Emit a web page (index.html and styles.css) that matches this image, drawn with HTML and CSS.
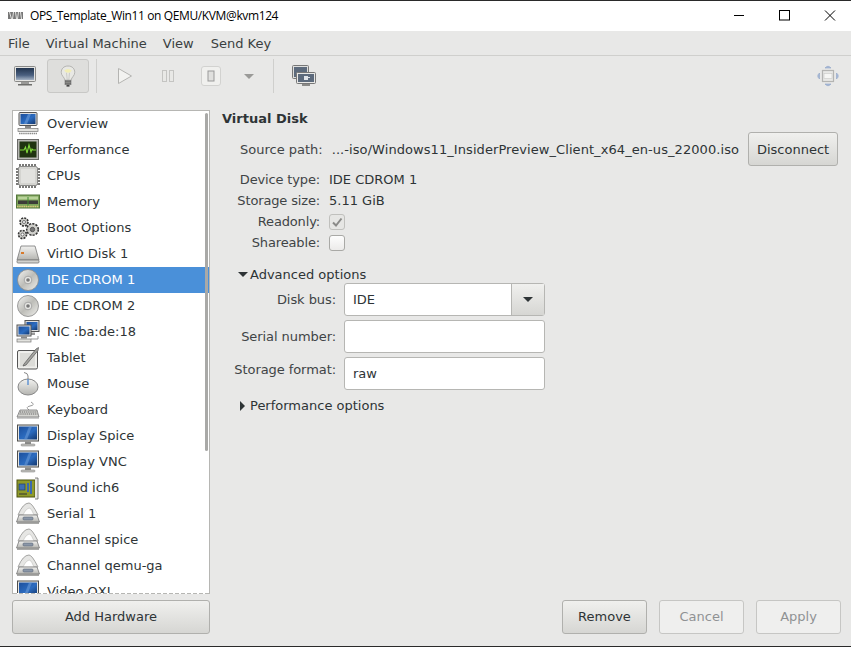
FILE: index.html
```html
<!DOCTYPE html>
<html lang="en">
<head>
    <meta charset="UTF-8">
    <title>OPS_Template_Win11 on QEMU/KVM@kvm124</title>
    <link rel="stylesheet" href="styles.css">
</head>
<body>
    <svg class="defs" width="0" height="0">
        <defs>
            <linearGradient id="screen" x1="0" y1="0" x2="1" y2="1">
                <stop offset="0" stop-color="#1d4f9c"/>
                <stop offset="0.55" stop-color="#2c6cc0"/>
                <stop offset="1" stop-color="#14386f"/>
            </linearGradient>
            <linearGradient id="slate" x1="0" y1="0" x2="0" y2="1">
                <stop offset="0" stop-color="#22344e"/>
                <stop offset="0.6" stop-color="#4a6080"/>
                <stop offset="1" stop-color="#a4b2c4"/>
            </linearGradient>
            <linearGradient id="disc" x1="0" y1="0" x2="1" y2="1">
                <stop offset="0" stop-color="#f4f4f2"/>
                <stop offset="0.5" stop-color="#bdbdb8"/>
                <stop offset="1" stop-color="#efefec"/>
            </linearGradient>
            <linearGradient id="metal" x1="0" y1="0" x2="0" y2="1">
                <stop offset="0" stop-color="#f2f2f0"/>
                <stop offset="1" stop-color="#b4b4b0"/>
            </linearGradient>
            <symbol id="i-toolmon" viewBox="0 0 22 20">
                <rect x=".5" y=".5" width="21" height="15" rx="1" fill="#e4e4e2" stroke="#8a8a88"/>
                <rect x="2" y="2" width="18" height="12" fill="url(#slate)"/>
                <rect x="7" y="16" width="8" height="2" fill="#9a9a98"/>
                <rect x="4" y="18" width="14" height="1.500" fill="#6e6e6c"/>
            </symbol>
            <symbol id="i-monitor" viewBox="0 0 24 24">
                <rect x="1.500" y="1" width="21" height="16" fill="#e6e6e3" stroke="#4f4f4d"/>
                <rect x="3" y="2.500" width="18" height="13" fill="url(#screen)"/>
                <path d="M8 15.500 L13 2.500 H16 L11 15.500Z" fill="#6d9cd8" opacity=".55"/>
                <rect x="9" y="17.500" width="6" height="2.500" fill="#8c8c8a"/>
                <rect x="5" y="20" width="14" height="2" rx="1" fill="#c4c4c0" stroke="#777" stroke-width=".5"/>
            </symbol>
            <symbol id="i-overview" viewBox="0 0 24 24">
                <rect x="3" y="0.500" width="18" height="13" rx="1" fill="#ddd" stroke="#555"/>
                <rect x="4.500" y="2" width="15" height="10" fill="url(#screen)"/>
                <path d="M8 12 L12 2 H15 L11 12Z" fill="#6d9cd8" opacity=".6"/>
                <rect x="9" y="14" width="6" height="2" fill="#888"/>
                <rect x="2" y="16.500" width="20" height="3" fill="#e2e2de" stroke="#777" stroke-width=".7"/>
                <path d="M3 21.500H21" stroke="#8c8c8a" stroke-width="1.500" stroke-dasharray="1.500 .6"/>
            </symbol>
            <symbol id="i-perf" viewBox="0 0 24 24">
                <rect x="1.500" y="1.500" width="21" height="20" fill="#b8b8b4" stroke="#6a6a68"/>
                <rect x="3.500" y="3.500" width="17" height="16" fill="#1f3310"/>
                <path d="M4 12H8L9.500 9 11 15 13 7 15 14 16 11 17 12H20" fill="none" stroke="#7fd63a" stroke-width="1.100"/>
            </symbol>
            <symbol id="i-cpu" viewBox="0 0 24 24">
                <path d="M4 0V24M7 0V24M10 0V24M13 0V24M16 0V24M19 0V24M0 5H24M0 8H24M0 11H24M0 14H24M0 17H24M0 20H24" stroke="#7a7a78" stroke-width="2"/>
                <rect x="2.500" y="2.500" width="19" height="19" rx="2" fill="#d4d4d0" stroke="#8a8a88"/>
                <rect x="5" y="5" width="14" height="14" fill="#e2e2df"/>
            </symbol>
            <symbol id="i-memory" viewBox="0 0 24 24">
                <rect x="0.500" y="5" width="23" height="13" fill="#7da35a" stroke="#54763b"/>
                <rect x="2" y="6.500" width="20" height="3" fill="#b9d39a"/>
                <rect x="2" y="10.500" width="20" height="3.500" fill="#3c3c38"/>
                <path d="M12 7V16" stroke="#3f8a2e"/>
                <path d="M1 16.500H23" stroke="#d9c77a" stroke-dasharray="1.500 .7" stroke-width="1.400"/>
            </symbol>
            <symbol id="i-gears" viewBox="0 0 24 24">
                <g fill="#d0d0cc" stroke="#333" stroke-width="1.600">
                    <circle cx="8" cy="6" r="4" stroke-dasharray="2 1.100"/>
                    <circle cx="16.500" cy="13.500" r="5.800" stroke-dasharray="2.200 1.100"/>
                    <circle cx="6.500" cy="18.500" r="4" stroke-dasharray="2 1.100"/>
                </g>
                <circle cx="8" cy="6" r="1.500" fill="#fff" stroke="#555" stroke-width=".8"/>
                <circle cx="16.500" cy="13.500" r="2.200" fill="#777" stroke="#444" stroke-width=".8"/>
                <circle cx="6.500" cy="18.500" r="1.500" fill="#fff" stroke="#555" stroke-width=".8"/>
            </symbol>
            <symbol id="i-disk" viewBox="0 0 24 24">
                <path d="M5 4H19L23 18H1Z" fill="url(#metal)" stroke="#777" stroke-width=".8"/>
                <rect x="1" y="18" width="22" height="3" rx="1" fill="#d2d2ce" stroke="#777" stroke-width=".8"/>
                <rect x="5" y="10" width="3" height="2" fill="#d87a2c"/>
            </symbol>
            <symbol id="i-cdrom" viewBox="0 0 24 24">
                <circle cx="12" cy="12" r="10.500" fill="url(#disc)" stroke="#888" stroke-width=".8"/>
                <circle cx="12" cy="12" r="3.800" fill="#e6e6e3" stroke="#999" stroke-width=".8"/>
                <circle cx="12" cy="12" r="1.800" fill="#777"/>
            </symbol>
            <symbol id="i-nic" viewBox="0 0 24 24">
                <rect x="9" y="0.500" width="14" height="11" fill="#ddd" stroke="#555"/>
                <rect x="10.500" y="2" width="11" height="8" fill="url(#screen)"/>
                <path d="M13 12.500H19V15H13Z" fill="#999"/>
                <rect x="1" y="5" width="14" height="11" fill="#ddd" stroke="#555"/>
                <rect x="2.500" y="6.500" width="11" height="8" fill="url(#screen)"/>
                <rect x="5" y="16.500" width="6" height="2" fill="#888"/>
                <rect x="1" y="19" width="14" height="3" fill="#e2e2de" stroke="#777" stroke-width=".7"/>
                <path d="M15 19H22V16" fill="none" stroke="#999"/>
            </symbol>
            <symbol id="i-tablet" viewBox="0 0 24 24">
                <rect x="1.500" y="4.500" width="20" height="18.500" rx="1.500" fill="#efefec" stroke="#555"/>
                <rect x="4" y="7" width="15" height="13.500" fill="#dcdcd8"/>
                <path d="M8 18 L20 3 L22.500 1.500 L22 4.500 L10 19 L7 20Z" fill="#a4a4a0" stroke="#555" stroke-width=".7"/>
            </symbol>
            <symbol id="i-mouse" viewBox="0 0 24 24">
                <path d="M12 9V4Q12 1 8 0.500" fill="none" stroke="#888"/>
                <ellipse cx="12" cy="15" rx="10" ry="8" fill="url(#metal)" stroke="#888"/>
                <path d="M12 7V13" stroke="#5a8fd0" stroke-width="1.400"/>
            </symbol>
            <symbol id="i-keyboard" viewBox="0 0 24 24">
                <path d="M13 12Q9 9 14 8 20 7 15 4" fill="none" stroke="#999"/>
                <path d="M4 12H21L23 19H1Z" fill="#d6d6d2" stroke="#777" stroke-width=".8"/>
                <path d="M4 14H21M3.500 16H21.500" stroke="#666" stroke-dasharray="1.200 .7"/>
                <path d="M1 20H23" stroke="#999"/>
            </symbol>
            <symbol id="i-sound" viewBox="0 0 24 24">
                <rect x="1" y="4" width="18" height="17" fill="#8f9a2a" stroke="#4c5210"/>
                <path d="M19 2H22V23H19" fill="#e6e6e3" stroke="#666" stroke-width=".8"/>
                <rect x="3" y="8" width="6" height="6" fill="#3f6fb0" stroke="#223f6c" stroke-width=".7"/>
                <path d="M12 7V16M15 5V18" stroke="#3b68b0" stroke-width="2"/>
                <path d="M3 18H11" stroke="#333"/>
            </symbol>
            <symbol id="i-serial" viewBox="0 0 24 24">
                <path d="M2 13Q7 1 13 1 16 1 22 13Z" fill="#e6e6e4" stroke="#a4a4a2"/>
                <path d="M7 13Q10 6 14 6 16 8 18 13Z" fill="#fff" stroke="#c4c4c2" stroke-width=".7"/>
                <path d="M3 13H21L23.500 20H.5Z" fill="url(#metal)" stroke="#777" stroke-width=".8"/>
                <rect x="7" y="15" width="10" height="3" rx="1" fill="#8b97a8" stroke="#5c6675" stroke-width=".6"/>
                <path d="M1 21H23" stroke="#8c8c8a" stroke-width="1.500"/>
            </symbol>
            <symbol id="i-bulb" viewBox="0 0 24 30">
                <path d="M12 1C6 1 3 5 3 9.500 3 14 7 15.500 8 20H16C17 15.500 21 14 21 9.500 21 5 18 1 12 1Z" fill="#e8e8e4" stroke="#a4a4a2"/>
                <path d="M7 7Q12 3 17 7 15.500 10 12 10 8.500 10 7 7Z" fill="#f2eeb4"/>
                <path d="M10 10L11 20M14 10L13 20" stroke="#b0b0ae" stroke-width=".7"/>
                <rect x="8" y="20" width="8" height="6" fill="#a9a9a5" stroke="#666" stroke-width=".7"/>
                <path d="M8 22H16M8 24H16" stroke="#444" stroke-width=".9"/>
                <rect x="10" y="26" width="4" height="2.500" fill="#444"/>
            </symbol>
        </defs>
    </svg>

    <div class="titlebar">
        <svg class="app-icon" width="15" height="7" viewBox="0 0 15 7">
            <rect width="15" height="7" fill="#777"/>
            <path d="M1.500 0L3.500 7M5.500 0L4.500 7M7.500 0L8.500 7M10.500 0L9.500 7M12.500 0L13.500 7" stroke="#e4e4e2" stroke-width="1"/>
        </svg>
        <span class="title">OPS_Template_Win11 on QEMU/KVM@kvm124</span>
        <div class="win-controls">
            <svg width="46" height="30" viewBox="0 0 46 30"><path d="M19 14.500H29" stroke="#000"/></svg>
            <svg width="46" height="30" viewBox="0 0 46 30"><rect x="18.500" y="9.500" width="10" height="9.500" fill="none" stroke="#000"/></svg>
            <svg width="44" height="30" viewBox="0 0 44 30"><path d="M18 9.500L28 19.500M28 9.500L18 19.500" stroke="#000"/></svg>
        </div>
    </div>

    <div class="menubar">
        <span>File</span>
        <span>Virtual Machine</span>
        <span>View</span>
        <span class="menu-last">Send Key</span>
    </div>

    <div class="toolbar">
        <div class="tool"><svg width="22" height="20"><use href="#i-toolmon"/></svg></div>
        <div class="tool tool-on"><svg width="18" height="23"><use href="#i-bulb"/></svg></div>
        <div class="tool-sep"></div>
        <div class="tool tool-run">
            <svg width="14" height="16" viewBox="0 0 14 16"><path d="M.5 .5L13.500 8L.5 15.500Z" fill="#f2f2f0" stroke="#b4b4b2"/></svg>
        </div>
        <div class="tool tool-pause">
            <svg width="12" height="12" viewBox="0 0 12 12">
                <rect x=".5" y=".5" width="4" height="11" fill="#e8e8e6" stroke="#c4c4c2"/>
                <rect x="7.500" y=".5" width="4" height="11" fill="#e8e8e6" stroke="#c4c4c2"/>
            </svg>
        </div>
        <div class="tool-stop">
            <svg width="8" height="12" viewBox="0 0 8 12"><rect x="1" y="1" width="6" height="10" fill="#e0e0de" stroke="#999"/></svg>
        </div>
        <div class="tool-drop"></div>
        <div class="tool-sep tool-sep2"></div>
        <div class="tool tool-shot">
            <svg width="24" height="22" viewBox="0 0 24 22">
                <rect x=".5" y=".5" width="16" height="13" rx="1" fill="#dededc" stroke="#777"/>
                <rect x="2" y="2" width="13" height="10" fill="#5c6a7c"/>
                <rect x="4.500" y="7.500" width="19" height="11" rx="1" fill="#e8e8e6" stroke="#777"/>
                <rect x="6" y="9" width="16" height="8" fill="#5c6a7c"/>
                <path d="M12 11H16V12H18V13H16V15H12Z" fill="#dfe3e8"/>
                <rect x="10" y="19" width="8" height="2" fill="#8a8a88"/>
            </svg>
        </div>
        <div class="tool-fill"></div>
        <svg class="tool-scale" width="24" height="22" viewBox="0 0 24 22">
            <g fill="#a9bcd9" stroke="#8ea3c6" stroke-width=".6">
                <path d="M9 3Q12 -.5 15 3Z"/>
                <path d="M9 19Q12 22.500 15 19Z"/>
                <path d="M3.500 8Q0 11 3.500 14Z"/>
                <path d="M20.500 8Q24 11 20.500 14Z"/>
            </g>
            <rect x="6.500" y="5.500" width="11" height="11" fill="#e8e8e6" stroke="#b4b4b2" stroke-width="1.200"/>
            <rect x="8" y="8.500" width="8" height="5" fill="#f6f6f4" stroke="#c8c8c6" stroke-width=".6"/>
        </svg>
    </div>

    <div class="main">
        <div class="sidebar">
            <div class="hwlist">
                <div class="hw"><svg width="24" height="24"><use href="#i-overview"/></svg><span>Overview</span></div>
                <div class="hw"><svg width="24" height="24"><use href="#i-perf"/></svg><span>Performance</span></div>
                <div class="hw"><svg width="24" height="24"><use href="#i-cpu"/></svg><span>CPUs</span></div>
                <div class="hw"><svg width="24" height="24"><use href="#i-memory"/></svg><span>Memory</span></div>
                <div class="hw"><svg width="24" height="24"><use href="#i-gears"/></svg><span>Boot Options</span></div>
                <div class="hw"><svg width="24" height="24"><use href="#i-disk"/></svg><span>VirtIO Disk 1</span></div>
                <div class="hw hw-sel"><svg width="24" height="24"><use href="#i-cdrom"/></svg><span>IDE CDROM 1</span></div>
                <div class="hw"><svg width="24" height="24"><use href="#i-cdrom"/></svg><span>IDE CDROM 2</span></div>
                <div class="hw"><svg width="24" height="24"><use href="#i-nic"/></svg><span>NIC :ba:de:18</span></div>
                <div class="hw"><svg width="24" height="24"><use href="#i-tablet"/></svg><span>Tablet</span></div>
                <div class="hw"><svg width="24" height="24"><use href="#i-mouse"/></svg><span>Mouse</span></div>
                <div class="hw"><svg width="24" height="24"><use href="#i-keyboard"/></svg><span>Keyboard</span></div>
                <div class="hw"><svg width="24" height="24"><use href="#i-monitor"/></svg><span>Display Spice</span></div>
                <div class="hw"><svg width="24" height="24"><use href="#i-monitor"/></svg><span>Display VNC</span></div>
                <div class="hw"><svg width="24" height="24"><use href="#i-sound"/></svg><span>Sound ich6</span></div>
                <div class="hw"><svg width="24" height="24"><use href="#i-serial"/></svg><span>Serial 1</span></div>
                <div class="hw"><svg width="24" height="24"><use href="#i-serial"/></svg><span>Channel spice</span></div>
                <div class="hw"><svg width="24" height="24"><use href="#i-serial"/></svg><span>Channel qemu-ga</span></div>
                <div class="hw"><svg width="24" height="24"><use href="#i-monitor"/></svg><span>Video QXL</span></div>
                <div class="list-thumb"></div>
                <div class="list-edge"></div>
            </div>
            <div class="btn btn-add"><span>Add Hardware</span></div>
        </div>

        <div class="detail">
            <div class="content">
                <h1>Virtual Disk</h1>
                <div class="source-row">
                    <span class="lbl">Source path:</span>
                    <span class="path">...-iso/Windows11_InsiderPreview_Client_x64_en-us_22000.iso</span>
                    <div class="btn btn-disc"><span>Disconnect</span></div>
                </div>
                <div class="info">
                    <span class="lbl">Device type:</span><span>IDE CDROM 1</span>
                    <span class="lbl">Storage size:</span><span>5.11 GiB</span>
                    <span class="lbl">Readonly:</span>
                    <span class="check check-on">
                        <svg width="12" height="12" viewBox="0 0 12 12"><path d="M2 6.500L5 9.500L10.500 2.500" fill="none" stroke="#8a8a88" stroke-width="2"/></svg>
                    </span>
                    <span class="lbl">Shareable:</span><span class="check"></span>
                </div>
                <div class="expander"><span class="arrow-down"></span>Advanced options</div>
                <div class="advanced">
                    <span class="lbl">Disk bus:</span>
                    <div class="combo"><span class="combo-text">IDE</span><span class="combo-btn"><span class="arrow-down arrow-dark"></span></span></div>
                    <span class="lbl">Serial number:</span>
                    <div class="entry"></div>
                    <span class="lbl lbl-up">Storage format:</span>
                    <div class="entry entry-text">raw</div>
                </div>
                <div class="expander expander2"><span class="arrow-right"></span>Performance options</div>
            </div>
            <div class="actions">
                <div class="btn"><span>Remove</span></div>
                <div class="btn btn-off"><span>Cancel</span></div>
                <div class="btn btn-off"><span>Apply</span></div>
            </div>
        </div>
    </div>
</body>
</html>
```

FILE: styles.css
```css
* { box-sizing: border-box; }
html, body { margin: 0; padding: 0; }
body {
    width: 851px;
    height: 647px;
    overflow: hidden;
    display: flex;
    flex-direction: column;
    background: #e8e8e7;
    color: #2e3436;
    font-family: "DejaVu Sans", sans-serif;
    font-size: 13px;
    border-top: 1px solid #2a2a2a;
    border-bottom: 1px solid #2a2a2a;
}
.defs { position: absolute; }

.titlebar {
    height: 30px;
    flex: none;
    display: flex;
    align-items: center;
    background: #fff;
    padding-left: 8px;
}
.app-icon { margin: 0 7px 2px 0; }
.title {
    font-family: "Open Sans", sans-serif;
    font-size: 12px;
    letter-spacing: -0.38px;
    color: #000;
    margin-bottom: 2px;
}
.win-controls { margin-left: auto; display: flex; }

.menubar {
    height: 25px;
    flex: none;
    display: flex;
    align-items: center;
    gap: 16px;
    padding-left: 8px;
    border-bottom: 1px solid #cfcfcd;
    color: #3a3f41;
}
.menu-last { margin-left: 1px; }

.toolbar {
    height: 40px;
    flex: none;
    display: flex;
    align-items: center;
    padding: 2px 0 2px 14px;
}
.tool { display: flex; align-items: center; justify-content: center; }
.tool-on {
    width: 42px;
    height: 34px;
    margin-left: 11px;
    background: #dededc;
    border: 1px solid #c8c8c6;
    border-radius: 3px;
}
.tool-sep { width: 1px; height: 34px; background: #cfcfcd; margin-left: 7px; }
.tool-run { margin-left: 21px; }
.tool-pause { margin-left: 30px; }
.tool-stop {
    width: 20px;
    height: 20px;
    margin-left: 27px;
    display: flex;
    align-items: center;
    justify-content: center;
    background: #f0f0ee;
    border: 1px solid #d2d2d0;
    border-radius: 3px;
}
.tool-drop {
    width: 0;
    height: 0;
    margin-left: 23px;
    border-left: 5px solid transparent;
    border-right: 5px solid transparent;
    border-top: 5px solid #9a9a98;
}
.tool-sep2 { margin-left: 19px; }
.tool-shot { margin-left: 18px; }
.tool-fill { flex: 1; }
.tool-scale { margin-right: 11px; }

.main {
    flex: 1;
    display: flex;
    min-height: 0;
    padding: 14px 10px 12px 12px;
}
.sidebar { width: 198px; flex: none; display: flex; flex-direction: column; }
.hwlist {
    position: relative;
    height: 484px;
    overflow: hidden;
    background: #fff;
    border: 1px solid #b6b6b3;
    border-bottom: none;
}
.hw {
    height: 26px;
    display: flex;
    align-items: center;
    gap: 7px;
    padding-left: 3px;
    color: #2e3436;
}
.hw span { margin-bottom: 2px; }
.hw-sel { background: #4a90d9; color: #fff; }
.list-thumb {
    position: absolute;
    top: 2px;
    right: 1px;
    width: 3px;
    height: 338px;
    background: #a9a9a7;
    border-radius: 2px;
}
.list-edge {
    position: absolute;
    left: 0;
    right: 0;
    bottom: 0;
    height: 1px;
    background: repeating-linear-gradient(90deg, #b6b6b3 0 4px, #fff 4px 6px);
}

.btn {
    display: flex;
    align-items: center;
    justify-content: center;
    width: 85px;
    height: 34px;
    background: linear-gradient(#f0f0ee, #d6d6d3);
    border: 1px solid #b0b0ad;
    border-radius: 3px;
    color: #2e3436;
}
.btn span { margin-bottom: 2px; }
.btn-add { width: 198px; margin-top: 6px; }
.btn-disc { width: 90px; margin-left: 9px; }
.btn-disc span { margin-bottom: 0; }
.btn-off {
    background: #efefee;
    border-color: #c6c6c4;
    color: #8f9294;
}

.detail {
    flex: 1;
    min-width: 0;
    display: flex;
    flex-direction: column;
    padding-left: 12px;
}
.content { flex: 1; }
h1 { margin: 1px 0 0; font-size: 13px; font-weight: bold; line-height: 15px; color: #2e3436; }
.lbl { text-align: right; color: #3f4446; }
.source-row {
    display: flex;
    align-items: center;
    height: 34px;
    margin-top: 6px;
    padding-left: 18px;
}
.path { margin-left: 9px; white-space: nowrap; letter-spacing: 0.07px; }
.info {
    display: grid;
    grid-template-columns: 98px auto;
    grid-auto-rows: 21px;
    column-gap: 9px;
    align-items: center;
    margin-top: 3px;
}
.info .lbl { letter-spacing: -0.15px; }
.check {
    width: 16px;
    height: 16px;
    display: flex;
    align-items: center;
    justify-content: center;
    background: linear-gradient(#fdfdfd, #ecebea);
    border: 1px solid #a9a9a6;
    border-radius: 3px;
}
.check-on { background: #e6e6e4; border-color: #c0c0bd; }
.expander {
    display: flex;
    align-items: center;
    height: 17px;
    margin-top: 13px;
    padding-left: 16px;
}
.expander2 { margin-top: 7px; padding-left: 18px; }
.arrow-down {
    display: inline-block;
    width: 0;
    height: 0;
    margin-right: 2px;
    border-left: 5px solid transparent;
    border-right: 5px solid transparent;
    border-top: 5px solid #2e3436;
}
.arrow-right {
    display: inline-block;
    width: 0;
    height: 0;
    margin-right: 5px;
    border-top: 5px solid transparent;
    border-bottom: 5px solid transparent;
    border-left: 5px solid #2e3436;
}
.arrow-dark { margin: 0; }
.advanced {
    display: grid;
    grid-template-columns: 114px 201px;
    grid-auto-rows: 33px;
    column-gap: 8px;
    row-gap: 4px;
    align-items: center;
}
.advanced .lbl { letter-spacing: -0.07px; }
.lbl-up { margin-top: -8px; }
.combo, .entry {
    height: 33px;
    background: #fff;
    border: 1px solid #b6b6b3;
    border-radius: 3px;
    display: flex;
    align-items: center;
    padding-left: 8px;
}
.combo { padding-left: 0; }
.combo-text { flex: 1; padding-left: 8px; }
.combo-btn {
    width: 33px;
    height: 100%;
    display: flex;
    align-items: center;
    justify-content: center;
    border-left: 1px solid #b6b6b3;
    background: linear-gradient(#f0f0ee, #d6d6d3);
}
.actions {
    display: flex;
    justify-content: flex-end;
    gap: 12px;
    margin-bottom: 0;
}
```
